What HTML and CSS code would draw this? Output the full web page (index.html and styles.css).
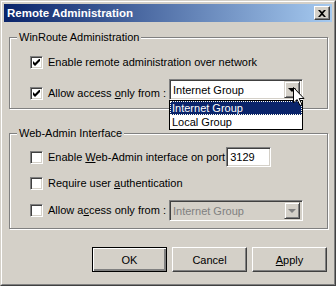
FILE: index.html
```html
<!DOCTYPE html>
<html lang="en">
<head>
    <meta charset="UTF-8">
    <title>Remote Administration</title>
    <link rel="stylesheet" href="styles.css">
</head>
<body>
    <div class="window">
        <div class="frame">
            <div class="titlebar">
                <span class="title">Remote Administration</span>
                <span class="close">
                    <svg width="8" height="7" viewBox="0 0 8 7"><path d="M0 0h2l2 2 2-2h2L5 3.5 8 7H6L4 5 2 7H0l3-3.5z" fill="#000"/></svg>
                </span>
            </div>

            <div class="content">
                <fieldset class="group group-win">
                    <legend>WinRoute Administration</legend>
                    <div class="row">
                        <span class="check">
                            <span class="box"><svg width="7" height="7" viewBox="0 0 7 7"><path d="M0 2 L2 4 L7 -1 L7 2 L2 7 L0 5 Z" fill="#000"/></svg></span>
                            <span class="label">Enable remote administration over network</span>
                        </span>
                    </div>
                    <div class="row row-bottom">
                        <span class="check fixed">
                            <span class="box"><svg width="7" height="7" viewBox="0 0 7 7"><path d="M0 2 L2 4 L7 -1 L7 2 L2 7 L0 5 Z" fill="#000"/></svg></span>
                            <span class="label">Allow access <u>o</u>nly from :</span>
                        </span>
                        <div class="combo-wrap">
                            <div class="combo">
                                <span class="combo-text">Internet Group</span>
                                <span class="arrow"><i class="tri"></i></span>
                            </div>
                            <div class="list">
                                <div class="item selected">Internet Group</div>
                                <div class="item">Local Group</div>
                            </div>
                            <svg class="cursor" width="12" height="19" viewBox="0 0 12 19">
                                <path d="M0.5 0.5 V16 L4 12.5 L7 18.5 L9 17.5 L6.2 11.5 H11 Z" fill="#fff" stroke="#000" stroke-width="1"/>
                            </svg>
                        </div>
                    </div>
                </fieldset>

                <fieldset class="group group-web">
                    <legend>Web-Admin Interface</legend>
                    <div class="row">
                        <span class="check">
                            <span class="box"></span>
                            <span class="label">Enable <u>W</u>eb-Admin interface on port</span>
                        </span>
                        <span class="port">3129</span>
                    </div>
                    <div class="row">
                        <span class="check">
                            <span class="box"></span>
                            <span class="label">Require user <u>a</u>uthentication</span>
                        </span>
                    </div>
                    <div class="row">
                        <span class="check fixed">
                            <span class="box"></span>
                            <span class="label">Allow a<u>c</u>cess only from :</span>
                        </span>
                        <div class="combo disabled">
                            <span class="combo-text">Internet Group</span>
                            <span class="arrow"><i class="tri"></i></span>
                        </div>
                    </div>
                </fieldset>

                <div class="buttons">
                    <button class="btn default">OK</button>
                    <button class="btn">Cancel</button>
                    <button class="btn"><u>A</u>pply</button>
                </div>
            </div>
        </div>
    </div>
</body>
</html>
```

FILE: styles.css
```css
body {
    margin: 0;
    font-family: "Liberation Sans", Arial, sans-serif;
    font-size: 11px;
    color: #000;
}
.window {
    width: 336px;
    height: 286px;
    box-sizing: border-box;
    background: #d4d0c8;
    border: 1px solid;
    border-color: #d4d0c8 #404040 #404040 #d4d0c8;
}
.frame {
    height: 100%;
    box-sizing: border-box;
    border: 1px solid;
    border-color: #fff #808080 #808080 #fff;
    padding: 2px;
}
.titlebar {
    height: 18px;
    display: flex;
    align-items: center;
    justify-content: space-between;
    padding: 0 2px 0 3px;
    background: linear-gradient(to right, #0a246a, #a6caf0);
}
.title {
    color: #fff;
    font-weight: bold;
    font-size: 11.5px;
}
.close {
    width: 16px;
    height: 14px;
    box-sizing: border-box;
    display: flex;
    align-items: center;
    justify-content: center;
    background: #d4d0c8;
    border: 1px solid;
    border-color: #fff #404040 #404040 #fff;
    box-shadow: inset -1px -1px #808080;
}
.content {
    padding: 0 4px 0 5px;
}
.group {
    margin: 0;
    padding: 0 0 0 20px;
    border: 1px solid #808080;
    box-shadow: inset 1px 1px #fff, 1px 1px #fff;
    display: flex;
    flex-direction: column;
    gap: 10px;
}
.group legend {
    margin-left: -13px;
    padding: 0 2px;
    line-height: 13px;
    background: #d4d0c8;
}
.group-win {
    margin-top: 9px;
    padding-top: 12px;
    padding-bottom: 8px;
}
.group-web {
    margin-top: 18px;
    padding-top: 7px;
    padding-bottom: 7px;
}
.row {
    display: flex;
    align-items: center;
}
.row-bottom {
    align-items: flex-end;
}
.check {
    display: flex;
    align-items: center;
    gap: 5px;
    line-height: 13px;
}
.check.fixed {
    width: 139px;
}
.label {
    white-space: nowrap;
}
.box {
    flex: none;
    width: 13px;
    height: 13px;
    box-sizing: border-box;
    background: #fff;
    border: 1px solid;
    border-color: #808080 #fff #fff #808080;
    box-shadow: inset 1px 1px #404040, inset -1px -1px #d4d0c8;
    display: flex;
    align-items: center;
    justify-content: center;
}
.port {
    width: 45px;
    height: 20px;
    box-sizing: border-box;
    margin-left: 1px;
    padding: 3px 0 0 3px;
    line-height: 13px;
    background: #fff;
    border: 1px solid;
    border-color: #808080 #fff #fff #808080;
    box-shadow: inset 1px 1px #404040, inset -1px -1px #d4d0c8;
}
.combo-wrap {
    position: relative;
}
.combo {
    width: 134px;
    height: 21px;
    box-sizing: border-box;
    display: flex;
    align-items: center;
    padding: 2px;
    background: #fff;
    border: 1px solid;
    border-color: #808080 #fff #fff #808080;
    box-shadow: inset 1px 1px #404040, inset -1px -1px #d4d0c8;
}
.combo-text {
    flex: 1;
    padding-left: 1px;
    white-space: nowrap;
}
.arrow {
    width: 16px;
    height: 17px;
    box-sizing: border-box;
    display: flex;
    align-items: center;
    justify-content: center;
    background: #d4d0c8;
    border: 1px solid;
    border-color: #d4d0c8 #404040 #404040 #d4d0c8;
    box-shadow: inset 1px 1px #fff, inset -1px -1px #808080;
}
.tri {
    width: 0;
    height: 0;
    border-left: 4px solid transparent;
    border-right: 4px solid transparent;
    border-top: 4px solid #000;
}
.combo.disabled {
    background: #d4d0c8;
    color: #808080;
}
.combo.disabled .tri {
    border-top-color: #808080;
}
.list {
    position: absolute;
    top: 100%;
    left: 0;
    width: 134px;
    box-sizing: border-box;
    background: #fff;
    border: 1px solid #000;
}
.item {
    height: 14px;
    line-height: 14px;
    padding-left: 2px;
}
.item.selected {
    background: #0a246a;
    color: #fff;
    outline: 1px dotted #ffe;
    outline-offset: -1px;
}
.cursor {
    position: absolute;
    left: 124px;
    top: 8px;
}
.buttons {
    display: flex;
    justify-content: flex-end;
    gap: 5px;
    margin-top: 18px;
    padding-right: 1px;
}
.btn {
    width: 75px;
    height: 25px;
    box-sizing: border-box;
    font: inherit;
    color: #000;
    background: #d4d0c8;
    border: 1px solid;
    border-color: #fff #404040 #404040 #fff;
    box-shadow: inset -1px -1px #808080;
    padding: 0;
}
.btn.default {
    border: 1px solid #000;
    box-shadow: inset 1px 1px #fff, inset -2px -2px #808080, inset -1px -1px #404040;
}
```
